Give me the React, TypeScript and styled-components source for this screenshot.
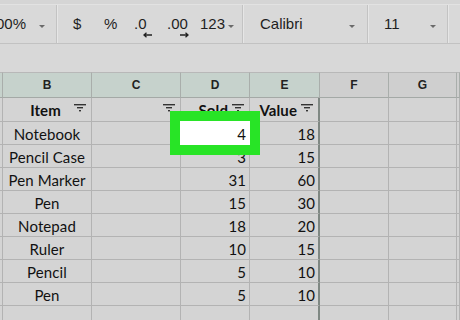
import * as React from 'react';
import styled, {createGlobalStyle} from 'styled-components';

const GlobalStyle = createGlobalStyle`
    html, body {
        margin: 0;
        padding: 0;
        width: 460px;
        height: 320px;
        overflow: hidden;
        background: #d5d5d5;
    }
`;

const Page = styled.div`
    width: 460px;
    height: 320px;
    overflow: hidden;
    display: flex;
    flex-direction: column;
    font-family: "Liberation Sans", Arial, sans-serif;
`;

const Toolbar = styled.div`
    height: 40px;
    margin-top: 4px;
    display: flex;
    align-items: stretch;
    background: #d9d9d9;
    border-top: 1px solid #e2e2e2;
    border-bottom: 1px solid #c2c2c2;
    box-sizing: border-box;
    flex-shrink: 0;
`;

interface IGroup {
    width: number;
}

const ToolGroup = styled.div<IGroup>`
    width: ${p => p.width}px;
    flex-shrink: 0;
    display: flex;
    align-items: center;
    border-right: 1px solid #c3c3c3;
    box-shadow: 1px 0 0 #e6e6e6;
    box-sizing: border-box;
    position: relative;
`;

interface IToolText {
    left: number;
}

const ToolText = styled.span<IToolText>`
    position: absolute;
    left: ${p => p.left}px;
    top: 10px;
    font-size: 15px;
    color: #1e1e1e;
    white-space: nowrap;
`;

const Caret = styled.span<IToolText>`
    position: absolute;
    left: ${p => p.left}px;
    top: 20px;
    width: 0;
    height: 0;
    border-left: 3px solid transparent;
    border-right: 3px solid transparent;
    border-top: 3px solid #6a6a6a;
`;

const Arrow = styled.svg<IToolText>`
    position: absolute;
    left: ${p => p.left}px;
    top: 27px;
`;

const FormulaBand = styled.div`
    height: 28px;
    background: #d8d8d8;
    flex-shrink: 0;
`;

const Sheet = styled.div`
    display: grid;
    grid-template-columns: 3px 89px 89px 69px 70px 69px 68px 3px;
    grid-template-rows: 26px 24px repeat(9, 23px);
    position: relative;
    font-family: Lato, "Open Sans", sans-serif;
`;

interface IColHead {
    selected?: boolean;
}

const ColHead = styled.div<IColHead>`
    background: ${p => (p.selected ? '#c6d2cc' : '#cfcfcf')};
    border-right: 1px solid #a9aeab;
    border-bottom: 1px solid #a4a9a6;
    border-top: 1px solid #b8b8b8;
    box-sizing: border-box;
    display: flex;
    align-items: center;
    justify-content: center;
    font-family: "Liberation Sans", Arial, sans-serif;
    font-weight: bold;
    font-size: 12px;
    color: #222;
`;

interface ICell {
    align?: 'left' | 'center' | 'right';
    edge?: boolean;
    white?: boolean;
    head?: boolean;
}

const Cell = styled.div<ICell>`
    position: relative;
    background: ${p => (p.white ? '#ffffff' : '#d4d4d4')};
    border-right: ${p => (p.edge ? '2px solid #7f8883' : '1px solid #b3b3b3')};
    border-bottom: 1px solid #b3b3b3;
    box-sizing: border-box;
    display: flex;
    align-items: ${p => (p.head ? 'flex-end' : 'center')};
    justify-content: ${p => (p.align === 'right' ? 'flex-end' : p.align === 'left' ? 'flex-start' : 'center')};
    padding: ${p => (p.head ? '0 0 2px 0' : '2px 0 0 0')};
    padding-right: ${p => (p.align === 'right' && !p.head ? '3px' : '0')};
    font-size: 15px;
    font-weight: ${p => (p.head ? 'bold' : 'normal')};
    letter-spacing: 0.1px;
    color: #111;
    white-space: nowrap;
`;

const HeadLabel = styled.span`
    flex: 1;
    text-align: center;
    padding-left: 18px;
`;

const FilterIcon = styled.svg`
    flex-shrink: 0;
    align-self: center;
    margin: 0 5px 2px 4px;
`;

const TotalText = styled.span`
    position: relative;
    top: 10px;
`;

const Highlight = styled.div`
    position: absolute;
    left: -11px;
    top: -11px;
    right: -11px;
    bottom: -11px;
    border: 10px solid #28e426;
    background: #ffffff;
    display: flex;
    align-items: center;
    justify-content: flex-end;
    padding: 2px 4px 0 0;
    font-size: 15px;
    z-index: 2;
`;

const Filter = () => (
    <FilterIcon width="12" height="8" viewBox="0 0 12 8">
        <rect x="0" y="0" width="12" height="1.4" fill="#333"/>
        <rect x="3" y="3" width="6" height="1.4" fill="#333"/>
        <rect x="5" y="6" width="2" height="1.4" fill="#333"/>
    </FilterIcon>
);

const rows: [string, number, number][] = [
    ['Notebook', 4, 18],
    ['Pencil Case', 3, 15],
    ['Pen Marker', 31, 60],
    ['Pen', 15, 30],
    ['Notepad', 18, 20],
    ['Ruler', 10, 15],
    ['Pencil', 5, 10],
    ['Pen', 5, 10],
];

const App = () => (
    <Page>
        <GlobalStyle/>
        <Toolbar>
            <ToolGroup width={57}>
                <ToolText left={-4}>00%</ToolText>
                <Caret left={39}/>
            </ToolGroup>
            <ToolGroup width={186}>
                <ToolText left={16}>$</ToolText>
                <ToolText left={47}>%</ToolText>
                <ToolText left={77}>.0</ToolText>
                <Arrow left={86} width="9" height="6" viewBox="0 0 9 6">
                    <path d="M9 3H1.5M3.5 0.8L1 3l2.5 2.2" stroke="#222" strokeWidth="1.3" fill="none"/>
                </Arrow>
                <ToolText left={110}>.00</ToolText>
                <Arrow left={123} width="9" height="6" viewBox="0 0 9 6">
                    <path d="M0 3h7.5M5.5 0.8L8 3 5.5 5.2" stroke="#222" strokeWidth="1.3" fill="none"/>
                </Arrow>
                <ToolText left={143}>123</ToolText>
                <Caret left={171}/>
            </ToolGroup>
            <ToolGroup width={125}>
                <ToolText left={17}>Calibri</ToolText>
                <Caret left={106}/>
            </ToolGroup>
            <ToolGroup width={80}>
                <ToolText left={16}>11</ToolText>
                <Caret left={62}/>
            </ToolGroup>
        </Toolbar>
        <FormulaBand/>
        <Sheet>
            <ColHead selected/>
            <ColHead selected>B</ColHead>
            <ColHead selected>C</ColHead>
            <ColHead selected>D</ColHead>
            <ColHead selected>E</ColHead>
            <ColHead>F</ColHead>
            <ColHead>G</ColHead>
            <ColHead/>

            <Cell/>
            <Cell head><HeadLabel>Item</HeadLabel><Filter/></Cell>
            <Cell head align="right"><Filter/></Cell>
            <Cell head align="right">Sold<Filter/></Cell>
            <Cell head align="right" edge>Value<Filter/></Cell>
            <Cell/>
            <Cell/>
            <Cell/>

            {rows.map(([item, sold, value], i) => (
                <React.Fragment key={i}>
                    <Cell/>
                    <Cell>{item}</Cell>
                    <Cell/>
                    {i === 0 ? (
                        <Cell white><Highlight>{sold}</Highlight></Cell>
                    ) : (
                        <Cell align="right">{sold}</Cell>
                    )}
                    <Cell align="right" edge>{value}</Cell>
                    <Cell/>
                    <Cell/>
                    <Cell/>
                </React.Fragment>
            ))}

            <Cell/>
            <Cell/>
            <Cell/>
            <Cell><TotalText>91</TotalText></Cell>
            <Cell edge><TotalText>178</TotalText></Cell>
            <Cell/>
            <Cell/>
            <Cell/>
        </Sheet>
    </Page>
);

export default App;
